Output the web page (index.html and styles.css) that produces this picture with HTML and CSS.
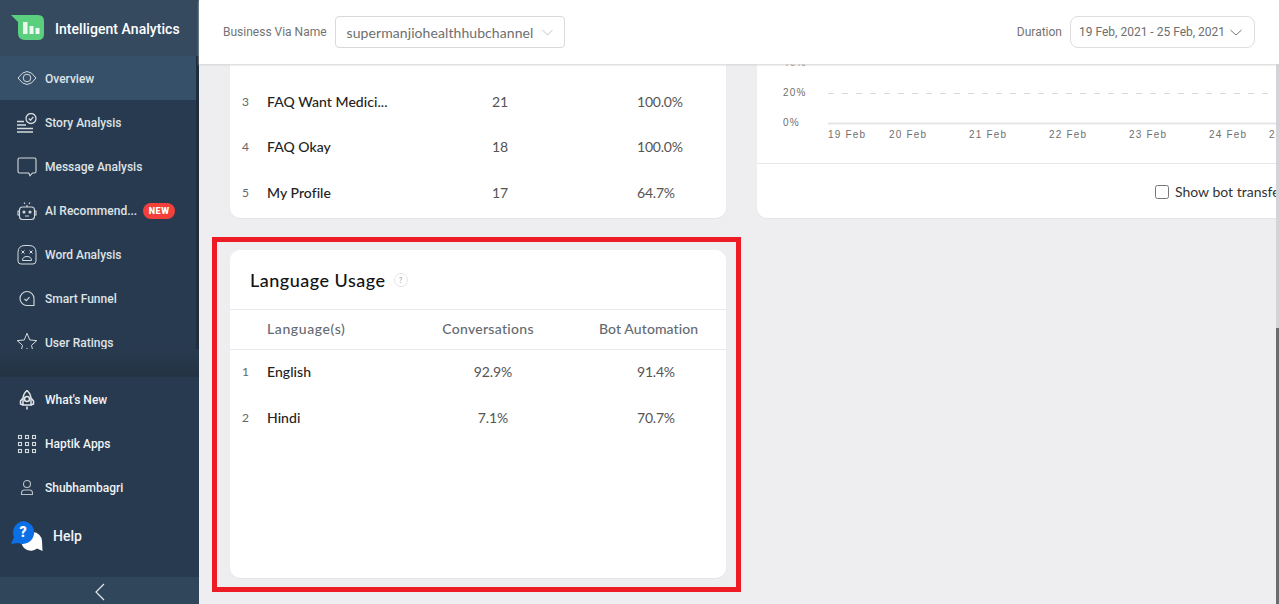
FILE: index.html
```html
<!DOCTYPE html>
<html>
    <head>
        <meta name="viewport" content="width=device-width, initial-scale=1.0">
        <meta charset="utf-8">
        <title>Intelligent Analytics</title>
        <link rel="stylesheet" href="styles.css">
    </head>
    <body>
        <aside class="sidebar">
            <div class="brand">
                <svg class="brand-logo" width="34" height="28" viewBox="0 0 34 28">
                    <path d="M0 1H27Q33 1 33 7V20Q33 26 27 26H14Q7 26 7 19V8Z" fill="#5ccf7e"/>
                    <rect x="12" y="8" width="4.500" height="12" fill="#eafaf0"/>
                    <rect x="18.500" y="12" width="4" height="8" fill="#eafaf0"/>
                    <rect x="24.500" y="14" width="4" height="6" fill="#eafaf0"/>
                </svg>
                <span>Intelligent Analytics</span>
            </div>
            <div class="nav-wrap">
                <nav class="nav">
                    <a class="nav-item active">
                        <svg class="nav-icon" viewBox="0 0 20 20" fill="none" stroke="#d5dade" stroke-width="1"><path d="M1 9Q10 -4 19 9Q10 22 1 9Z"/><circle cx="10" cy="9" r="3.800"/></svg>
                        Overview
                    </a>
                    <a class="nav-item">
                        <svg class="nav-icon" viewBox="0 0 20 20" fill="none" stroke="#d5dade" stroke-width="1.300"><path d="M0 8.500H7M0 12H9M0 15.500H16M0 19H16"/><circle cx="14" cy="5.500" r="5"/><path d="M11.800 5.500L13.500 7.200L16.300 4"/></svg>
                        Story Analysis
                    </a>
                    <a class="nav-item">
                        <svg class="nav-icon" viewBox="0 0 20 20" fill="none" stroke="#d5dade" stroke-width="1.100"><path d="M2.500 1H17.500Q19 1 19 2.500V14.500Q19 16 17.500 16H15.500L13 18.800L11.800 16H2.500Q1 16 1 14.500V2.500Q1 1 2.500 1Z"/></svg>
                        Message Analysis
                    </a>
                    <a class="nav-item">
                        <svg class="nav-icon" viewBox="0 0 20 20" fill="none" stroke="#d5dade" stroke-width="1.100"><rect x="2.500" y="6" width="15" height="12.500" rx="3"/><path d="M10 4V6M7 1.500L8 3M13 1.500L12 3M2.500 10H1V14H2.500M17.500 10H19V14H17.500M8 15H12"/><circle cx="7" cy="11" r="1" fill="#d5dade"/><circle cx="13" cy="11" r="1" fill="#d5dade"/></svg>
                        AI Recommend...
                        <span class="badge">NEW</span>
                    </a>
                    <a class="nav-item">
                        <svg class="nav-icon" viewBox="0 0 20 20" fill="none" stroke="#d5dade" stroke-width="1"><path d="M8 .5H12Q19 .5 19 7.500V16Q19 19 16 19H4Q1 19 1 16V7.500Q1 .5 8 .5Z"/><path d="M4.500 5.500L7.500 8.500M7.500 5.500L4.500 8.500M12.500 5.500L15.500 8.500M15.500 5.500L12.500 8.500"/><path d="M5.500 15.500Q5.500 11.500 10 11.500Q14.500 11.500 14.500 15.500Z"/></svg>
                        Word Analysis
                    </a>
                    <a class="nav-item">
                        <svg class="nav-icon" viewBox="0 0 20 20" fill="none" stroke="#d5dade" stroke-width="1.100"><path d="M10 2.500A7 7 0 1 0 10 16.500H17V9.500A7 7 0 0 0 10 2.500Z"/><path d="M7.500 10L9.300 11.700L12.500 8.200"/></svg>
                        Smart Funnel
                    </a>
                    <a class="nav-item">
                        <svg class="nav-icon" viewBox="0 0 20 20" fill="none" stroke="#d5dade" stroke-width="1"><path d="M10 .3L12.800 7L19.800 7.600L14.500 12.300L16.200 19.500L10 15.700L3.800 19.500L5.500 12.300L.2 7.600L7.200 7Z"/></svg>
                        User Ratings
                    </a>
                </nav>
                <div class="nav-scroll"></div>
            </div>
            <div class="nav-fade"></div>
            <div class="nav-bottom">
                <a class="nav-item light">
                    <svg class="nav-icon" viewBox="0 0 20 20" fill="none" stroke="#e4e7ea" stroke-width="1.500"><path d="M10 .5Q14 4 14 9V15H6V9Q6 4 10 .5Z"/><circle cx="10" cy="9" r="2.500"/><path d="M6 8L3.500 11V14L6 15M14 8L16.500 11V14L14 15M10 16.500V19.500"/></svg>
                    What's New
                </a>
                <a class="nav-item light">
                    <svg class="nav-icon" viewBox="0 0 20 20" fill="none" stroke="#d5dade" stroke-width="1.100"><rect x="1.500" y="1.500" width="3" height="3"/><rect x="8.500" y="1.500" width="3" height="3"/><rect x="15.500" y="1.500" width="3" height="3"/><rect x="1.500" y="8.500" width="3" height="3"/><rect x="8.500" y="8.500" width="3" height="3"/><rect x="15.500" y="8.500" width="3" height="3"/><rect x="1.500" y="15.500" width="3" height="3"/><rect x="8.500" y="15.500" width="3" height="3"/><rect x="15.500" y="15.500" width="3" height="3"/></svg>
                    Haptik Apps
                </a>
                <a class="nav-item light">
                    <svg class="nav-icon" viewBox="0 0 20 20" fill="none" stroke="#b9c1c8" stroke-width="1.100"><circle cx="10" cy="6" r="3.500"/><path d="M4.500 16.500V15Q4.500 12 7.500 12H12.500Q15.500 12 15.500 15V16.500Z"/></svg>
                    Shubhambagri
                </a>
                <a class="help">
                    <svg class="help-icon" width="32" height="31" viewBox="0 0 32 31">
                        <path d="M22 11A9.500 9.500 0 0 1 31 20L31.500 30L26 27.500A9.500 9.500 0 1 1 22 11Z" fill="#fff"/>
                        <path d="M12.500 0A11.500 11.500 0 1 1 7 22L0 23L3 16A11.500 11.500 0 0 1 12.500 0Z" fill="#0b6fe6"/>
                        <text x="12" y="16" class="help-mark">?</text>
                    </svg>
                    Help
                </a>
            </div>
            <div class="collapse">
                <svg width="12" height="18" viewBox="0 0 12 18" fill="none" stroke="#e4e7ea" stroke-width="1.200"><path d="M10 1L2 9L10 17"/></svg>
            </div>
        </aside>

        <div class="main">
            <header class="topbar">
                <span class="field-label">Business Via Name</span>
                <div class="select">
                    supermanjiohealthhubchannel
                    <svg width="11" height="7" viewBox="0 0 11 7" fill="none" stroke="#c4c4c4"><path d="M.5 1L5.500 6L10.500 1"/></svg>
                </div>
                <span class="field-label duration-label">Duration</span>
                <div class="date-select">
                    19 Feb, 2021 - 25 Feb, 2021
                    <svg width="12" height="7" viewBox="0 0 12 7" fill="none" stroke="#777"><path d="M.5 1L6 6L11.500 1"/></svg>
                </div>
            </header>

            <div class="body-row">
                <div class="content">
                    <div class="top-row">
                        <section class="card top-card">
                            <div class="row top-data"><span class="idx">3</span><span class="name">FAQ Want Medici...</span><span class="conv">21</span><span class="bot">100.0%</span></div>
                            <div class="row top-data"><span class="idx">4</span><span class="name">FAQ Okay</span><span class="conv">18</span><span class="bot">100.0%</span></div>
                            <div class="row top-data"><span class="idx">5</span><span class="name">My Profile</span><span class="conv">17</span><span class="bot">64.7%</span></div>
                        </section>
                        <section class="card chart-card">
                            <svg class="chart" width="600" height="99" viewBox="0 0 600 99">
                                <text x="26" y="2">40%</text>
                                <text x="26" y="32">20%</text>
                                <text x="26" y="62">0%</text>
                                <line x1="71" y1="29.500" x2="600" y2="29.500" stroke="#d9d9d9" stroke-dasharray="6 8"/>
                                <line x1="71" y1="59.500" x2="600" y2="59.500" stroke="#e6e6e6" stroke-width="2"/>
                                <text x="71" y="74">19 Feb</text>
                                <text x="132" y="74">20 Feb</text>
                                <text x="212" y="74">21 Feb</text>
                                <text x="292" y="74">22 Feb</text>
                                <text x="372" y="74">23 Feb</text>
                                <text x="452" y="74">24 Feb</text>
                                <text x="512" y="74">25 Feb</text>
                            </svg>
                            <label class="chart-foot"><input type="checkbox">Show bot transfer</label>
                        </section>
                    </div>

                    <div class="highlight">
                        <section class="card lang-card">
                            <div class="card-head">
                                <h2>Language Usage</h2>
                                <span class="hint">?</span>
                            </div>
                            <div class="row head-row"><span></span><span class="name">Language(s)</span><span class="conv">Conversations</span><span class="bot">Bot Automation</span></div>
                            <div class="row"><span class="idx">1</span><span class="name">English</span><span class="conv">92.9%</span><span class="bot">91.4%</span></div>
                            <div class="row"><span class="idx">2</span><span class="name">Hindi</span><span class="conv">7.1%</span><span class="bot">70.7%</span></div>
                        </section>
                    </div>
                </div>
                <div class="page-scroll"><div class="page-thumb"></div></div>
            </div>
        </div>
    </body>
</html>
```

FILE: styles.css
```css
* {
    box-sizing: border-box;
}

html, body {
    height: 100%;
}

body {
    margin: 0;
    display: flex;
    height: 604px;
    overflow: hidden;
    background-color: #eeeef0;
    font-family: "Lato", "Liberation Sans", sans-serif;
}

/* sidebar */
.sidebar {
    width: 199px;
    flex: none;
    display: flex;
    flex-direction: column;
    background-color: #283a4f;
    color: #dfe3e6;
    font-family: "Roboto", "Liberation Sans", sans-serif;
}

.brand {
    height: 56px;
    display: flex;
    align-items: center;
    padding-top: 2px;
    background-color: #364a5f;
    color: #ffffff;
    font-size: 14px;
    font-weight: 500;
    letter-spacing: .05px;
}

.brand-logo {
    margin: -3px 10px 0 11px;
    flex: none;
}

.nav-wrap {
    display: flex;
    height: 293px;
}

.nav {
    flex: 1;
}

.nav-scroll {
    width: 3px;
    background-color: #1f2d3c;
}

.nav-fade {
    height: 28px;
    background: linear-gradient(#283a4f, #243343);
}

.nav-item {
    height: 44px;
    display: flex;
    align-items: center;
    padding: 2px 0 0 17px;
    font-size: 12px;
    font-weight: 500;
}

.nav-item.active {
    background-color: #375069;
}

.nav-item.light {
    color: #f1f3f5;
}

.nav-icon {
    width: 20px;
    height: 20px;
    margin-right: 8px;
    flex: none;
}

.badge {
    margin-left: 6px;
    padding: 0 5.500px;
    height: 16px;
    line-height: 16px;
    border-radius: 8px;
    background-color: #f4403a;
    color: #ffffff;
    font-size: 9px;
    font-weight: 900;
    letter-spacing: .6px;
}

.help {
    height: 46px;
    margin-top: 4px;
    display: flex;
    align-items: center;
    padding-left: 11px;
    color: #f1f3f5;
    font-size: 14px;
    font-weight: 500;
}

.help-icon {
    margin-right: 10px;
    flex: none;
}

.help-mark {
    fill: #ffffff;
    font-size: 14px;
    font-weight: 900;
    text-anchor: middle;
}

.nav-bottom {
    flex: 1;
}

.collapse {
    height: 27px;
    display: flex;
    align-items: center;
    justify-content: center;
    padding-top: 3px;
    background-color: #30465b;
}

/* top bar */
.main {
    flex: 1;
    min-width: 0;
    display: flex;
    flex-direction: column;
}

.topbar {
    height: 64px;
    flex: none;
    display: flex;
    align-items: center;
    padding: 0 24px;
    background-color: #ffffff;
    box-shadow: 0 1px 2px #d4d4d4;
    position: relative;
    z-index: 1;
}

.field-label {
    margin-right: 8px;
    color: #737373;
    font-family: "Roboto", "Liberation Sans", sans-serif;
    font-size: 12px;
}

.select {
    width: 230px;
    height: 32px;
    display: flex;
    align-items: center;
    justify-content: space-between;
    padding: 0 11px 0 11px;
    border: 1px solid #d9d9d9;
    border-radius: 4px;
    color: #6e6e6e;
    font-size: 14px;
    letter-spacing: .08px;
}

.duration-label {
    margin-left: auto;
}

.date-select {
    width: 185px;
    height: 32px;
    display: flex;
    align-items: center;
    justify-content: space-between;
    padding: 0 12px 0 8px;
    border: 1px solid #dedede;
    border-radius: 8px;
    color: #6e6e6e;
    font-family: "Roboto", "Liberation Sans", sans-serif;
    font-size: 12px;
}

/* scrolled page */
.body-row {
    flex: 1;
    min-height: 0;
    display: flex;
}

.content {
    flex: 1;
    min-width: 0;
    overflow: hidden;
    padding-left: 13px;
}

.page-scroll {
    width: 3px;
    flex: none;
    display: flex;
    flex-direction: column;
    justify-content: flex-end;
    background-color: #d4d4d8;
}

.page-thumb {
    height: 276px;
    background-color: #6b6b6b;
}

.top-row {
    display: flex;
    gap: 31px;
    margin-left: 18px;
    height: 154px;
}

.card {
    background-color: #ffffff;
    border-radius: 10px;
    box-shadow: 0 1px 1px #e4e4e6;
}

.top-card {
    width: 496px;
    flex: none;
    padding-top: 16px;
    border-radius: 0 0 10px 10px;
}

.chart-card {
    width: 600px;
    flex: none;
    border-radius: 0 0 0 10px;
}

.chart {
    display: block;
    border-bottom: 1px solid #e6e6e6;
    box-sizing: content-box;
    font-family: "Liberation Sans", sans-serif;
    font-size: 10px;
    letter-spacing: 1.200px;
    fill: #6f6f6f;
}

.chart-foot {
    height: 55px;
    display: flex;
    align-items: center;
    padding-left: 398px;
    color: #333333;
    font-size: 14px;
}

.chart-foot input {
    width: 14px;
    height: 14px;
    margin: 0 6px 0 0;
}

.highlight {
    width: 529px;
    height: 355px;
    margin-top: 19px;
    padding: 8px 10px 9px 13px;
    border: 5px solid #ed1c24;
}

.lang-card {
    height: 100%;
}

.card-head {
    height: 60px;
    display: flex;
    align-items: center;
    gap: 8px;
    padding-left: 20px;
    border-bottom: 1px solid #e9e9eb;
}

.card-head h2 {
    margin: 0;
    color: #111111;
    font-size: 18px;
    font-weight: 500;
    letter-spacing: .5px;
}

.hint {
    width: 14px;
    height: 14px;
    line-height: 12px;
    text-align: center;
    border: 1px solid #e6e6e6;
    border-radius: 50%;
    color: #a0a0a0;
    font-size: 8px;
}

.row {
    height: 46px;
    display: grid;
    grid-template-columns: 37px 143px 166px 1fr;
    align-items: center;
    padding-bottom: 3px;
    font-size: 14px;
    color: #555555;
}

.idx {
    padding-left: 12px;
    font-size: 12px;
    color: #666666;
}

.name {
    color: #222222;
    font-weight: 500;
    letter-spacing: .05px;
}

.conv {
    text-align: center;
    letter-spacing: -.1px;
}

.bot {
    padding-left: 61px;
    letter-spacing: -.2px;
}

.top-data {
    height: 45.500px;
}

.top-data .conv {
    padding-left: 14px;
}

.head-row {
    height: 40px;
    border-bottom: 1px solid #e9e9eb;
    color: #666a70;
    font-weight: 500;
}

.head-row .name {
    color: #666a70;
    letter-spacing: .6px;
}

.head-row .conv {
    padding-right: 10px;
    letter-spacing: .3px;
}

.head-row .bot {
    padding-left: 23px;
    letter-spacing: .1px;
}
```
